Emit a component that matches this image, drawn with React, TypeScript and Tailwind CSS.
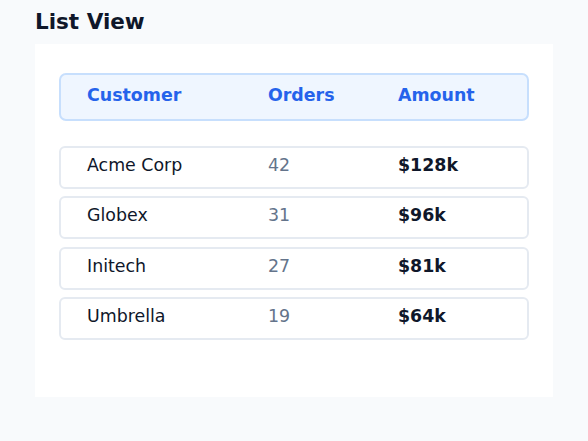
const rows = [
  { name: 'Acme Corp', orders: 42, amount: '$128k' },
  { name: 'Globex', orders: 31, amount: '$96k' },
  { name: 'Initech', orders: 27, amount: '$81k' },
  { name: 'Umbrella', orders: 19, amount: '$64k' },
];

export default function App() {
  return (
    <div
      className="min-h-[441px] bg-[#f8fafc] px-[35px] pt-[6px]"
      style={{ fontFamily: '"DejaVu Sans", sans-serif' }}
    >
      <h1 className="text-[21.5px] leading-[31px] font-bold text-[#0f172a]">List View</h1>

      <div className="mt-[7px] h-[353px] bg-white px-6 pt-[29px]">
        <div className="grid h-[48px] grid-cols-[181px_130px_1fr] rounded-[7px] border-2 border-[#c7dffd] bg-[#eff6ff] px-[26px] pt-[8px] text-[17.4px] leading-[25.5px] font-bold text-[#2563eb]">
          <span>Customer</span>
          <span>Orders</span>
          <span>Amount</span>
        </div>

        <div className="mt-[25px] flex flex-col gap-[7.33px]">
          {rows.map((r) => (
            <div
              key={r.name}
              className="grid h-[43px] grid-cols-[181px_130px_1fr] rounded-[6px] border-2 border-[#e5eaf1] px-[26px] pt-[5px] text-[17.4px] leading-[25.5px]"
            >
              <span className="text-[#0f172a]">{r.name}</span>
              <span className="text-[#64748b]">{r.orders}</span>
              <span className="font-bold text-[#0f172a]">{r.amount}</span>
            </div>
          ))}
        </div>
      </div>
    </div>
  );
}
